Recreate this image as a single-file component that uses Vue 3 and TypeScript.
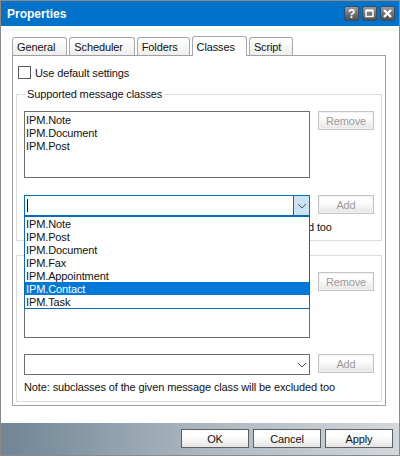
<script setup lang="ts">
const tabs = ['General', 'Scheduler', 'Folders', 'Classes', 'Script'];
const supported = ['IPM.Note', 'IPM.Document', 'IPM.Post'];
const options = ['IPM.Note', 'IPM.Post', 'IPM.Document', 'IPM.Fax', 'IPM.Appointment', 'IPM.Contact', 'IPM.Task'];
const selected = 'IPM.Contact';
</script>

<template>
  <div class="dialog">
    <header class="titlebar">
      <span class="title">Properties</span>
      <div class="win-btns">
        <span class="win-btn">
          <span class="win-glyph">?</span>
        </span>
        <span class="win-btn">
          <svg width="11" height="11" viewBox="0 0 11 11">
            <rect x="2" y="2.5" width="7" height="6" fill="none" stroke="#fff" stroke-width="1.5" />
            <path d="M2 2.5h7" stroke="#fff" stroke-width="2" />
          </svg>
        </span>
        <span class="win-btn">
          <svg width="11" height="11" viewBox="0 0 11 11">
            <path d="M2 2l7 7M9 2l-7 7" stroke="#fff" stroke-width="2.4" />
          </svg>
        </span>
      </div>
    </header>

    <div class="body">
      <div class="tabs">
        <div
          v-for="tab in tabs"
          :key="tab"
          class="tab"
          :class="{ active: tab === 'Classes' }"
        >
          {{ tab }}
        </div>
      </div>

      <div class="page">
        <label class="check-row">
          <span class="checkbox"></span>
          Use default settings
        </label>

        <fieldset class="group first">
          <legend>Supported message classes</legend>
          <div class="row list-row">
            <ul class="listbox">
              <li v-for="item in supported" :key="item">{{ item }}</li>
            </ul>
            <button class="btn disabled">Remove</button>
          </div>
          <div class="row combo-row">
            <div class="combo focused">
              <span class="caret"></span>
              <span class="arrow">
                <svg width="10" height="6" viewBox="0 0 10 6">
                  <path d="M1 1l4 4 4-4" fill="none" stroke="#4a5560" stroke-width="1" />
                </svg>
              </span>
              <ul class="dropdown">
                <li
                  v-for="item in options"
                  :key="item"
                  :class="{ selected: item === selected }"
                >
                  {{ item }}
                </li>
              </ul>
            </div>
            <button class="btn disabled">Add</button>
          </div>
          <p class="note">Note: subclasses of the given message class will be included too</p>
        </fieldset>

        <fieldset class="group second">
          <div class="row list-row">
            <div class="listbox"></div>
            <button class="btn disabled">Remove</button>
          </div>
          <div class="row combo-row">
            <div class="combo">
              <span class="arrow plain">
                <svg width="10" height="6" viewBox="0 0 10 6">
                  <path d="M1 1l4 4 4-4" fill="none" stroke="#4a5560" stroke-width="1" />
                </svg>
              </span>
            </div>
            <button class="btn disabled">Add</button>
          </div>
          <p class="note">Note: subclasses of the given message class will be excluded too</p>
        </fieldset>
      </div>
    </div>

    <footer class="footer">
      <button class="btn action">OK</button>
      <button class="btn action">Cancel</button>
      <button class="btn action">Apply</button>
    </footer>
  </div>
</template>

<style scoped>
.dialog {
  width: 400px;
  height: 456px;
  box-sizing: border-box;
  display: flex;
  flex-direction: column;
  background: #fff;
  border: 1px solid #8a8a8a;
  border-bottom: none;
  font-family: "Liberation Sans", sans-serif;
  font-size: 11px;
  letter-spacing: -0.12px;
  color: #111;
  overflow: hidden;
}
.titlebar {
  height: 25px;
  flex: none;
  display: flex;
  align-items: center;
  justify-content: space-between;
  padding: 0 4px 0 6px;
  background: #0072c9;
}
.title {
  color: #fff;
  font-weight: 700;
  font-size: 12px;
  letter-spacing: 0;
}
.win-btns {
  display: flex;
  gap: 3px;
}
.win-btn {
  box-sizing: border-box;
  width: 15px;
  height: 15px;
  display: flex;
  align-items: center;
  justify-content: center;
  border-radius: 2px;
  background: linear-gradient(#9a9a9a, #4e4e4e);
  border: 1px solid #2f4f6a;
}
.win-glyph {
  color: #fff;
  font-weight: 700;
  font-size: 12px;
  line-height: 1;
}
.body {
  flex: 1;
  padding: 10px 13px 0 11px;
}
.tabs {
  display: flex;
  height: 19px;
  gap: 2px;
  position: relative;
  z-index: 1;
}
.tab {
  box-sizing: border-box;
  height: 18px;
  margin-top: 1px;
  padding: 0 11px 0 4px;
  line-height: 18px;
  border: 1px solid #a8a8a8;
  border-bottom: none;
  border-radius: 3px 3px 0 0;
  background: linear-gradient(#fff, #eee);
}
.tab.active {
  height: 20px;
  margin-top: 0;
  line-height: 20px;
  background: #fff;
}
.page {
  box-sizing: border-box;
  height: 351px;
  border: 1px solid #a0a0a0;
  padding: 0 3px;
  display: flex;
  flex-direction: column;
}
.check-row {
  display: flex;
  align-items: center;
  gap: 4px;
  height: 17px;
  margin: 8px 0 0 2px;
}
.checkbox {
  box-sizing: border-box;
  width: 13px;
  height: 13px;
  border: 1px solid #5a5a5a;
  background: #fff;
}
.group {
  box-sizing: border-box;
  margin: 0;
  padding: 0 7px;
  min-width: 0;
  border: 1px solid #dcdcdc;
}
.group legend {
  padding: 0 2px;
  margin-left: 1px;
  line-height: 14px;
}
.group.first {
  margin-top: 6px;
  height: 154px;
}
.group.second {
  margin-top: 14px;
  height: 147px;
  padding-top: 16px;
}
.row {
  display: flex;
  align-items: flex-start;
  gap: 8px;
}
.list-row {
  height: 67px;
  margin-top: 10px;
}
.group.second .list-row {
  margin-top: 0;
  height: 66px;
}
.combo-row {
  margin-top: 17px;
}
.group.second .combo-row {
  margin-top: 16px;
}
.listbox {
  box-sizing: border-box;
  width: 286px;
  height: 100%;
  margin: 0;
  padding: 2px 1px 0;
  list-style: none;
  border: 1px solid #6e6e6e;
  background: #fff;
  line-height: 13px;
}
.btn {
  font: inherit;
  letter-spacing: inherit;
  box-sizing: border-box;
  padding: 0;
  border: 1px solid #a5a5a5;
  background: linear-gradient(#fdfdfd 40%, #e4e4e4);
  color: #111;
}
.btn.disabled {
  width: 56px;
  height: 19px;
  color: #9a9a9a;
  border-color: #c4c4c4;
  box-shadow: inset 0 0 0 1px #f2f2f2;
}
.combo {
  position: relative;
  box-sizing: border-box;
  width: 286px;
  height: 21px;
  border: 1px solid #6e6e6e;
  background: #fff;
}
.combo.focused {
  border-color: #0a6ab5;
}
.caret {
  position: absolute;
  left: 2px;
  top: 3px;
  width: 1px;
  height: 13px;
  background: #111;
}
.arrow {
  position: absolute;
  right: 0;
  top: 0;
  bottom: 0;
  width: 15px;
  display: flex;
  align-items: center;
  justify-content: center;
  background: #cbe3f6;
  border-left: 1px solid #0a6ab5;
}
.arrow.plain {
  background: transparent;
  border-left: none;
}
.dropdown {
  position: absolute;
  left: -1px;
  top: 19px;
  width: 286px;
  box-sizing: border-box;
  margin: 0;
  padding: 0;
  list-style: none;
  background: #fff;
  border: 1px solid #0a6ab5;
  border-top: 2px solid #0a6ab5;
  z-index: 2;
}
.dropdown li {
  height: 13px;
  line-height: 14px;
  padding-left: 1px;
}
.dropdown li.selected {
  background: #0078d7;
  color: #fff;
}
.note {
  margin: 4px 0 0;
  line-height: 14px;
  white-space: nowrap;
}
.group.second .note {
  margin-top: 5px;
}
.footer {
  box-sizing: border-box;
  height: 33px;
  flex: none;
  display: flex;
  justify-content: flex-end;
  align-items: center;
  gap: 4px;
  padding: 0 6px 1px 0;
  background: linear-gradient(90deg, #708595, #aab6bf 50%, #d3d8dc);
  border-bottom: 1px solid #8a8a8a;
}
.btn.action {
  width: 68px;
  height: 19px;
  border-color: #5f5f5f;
}
</style>
